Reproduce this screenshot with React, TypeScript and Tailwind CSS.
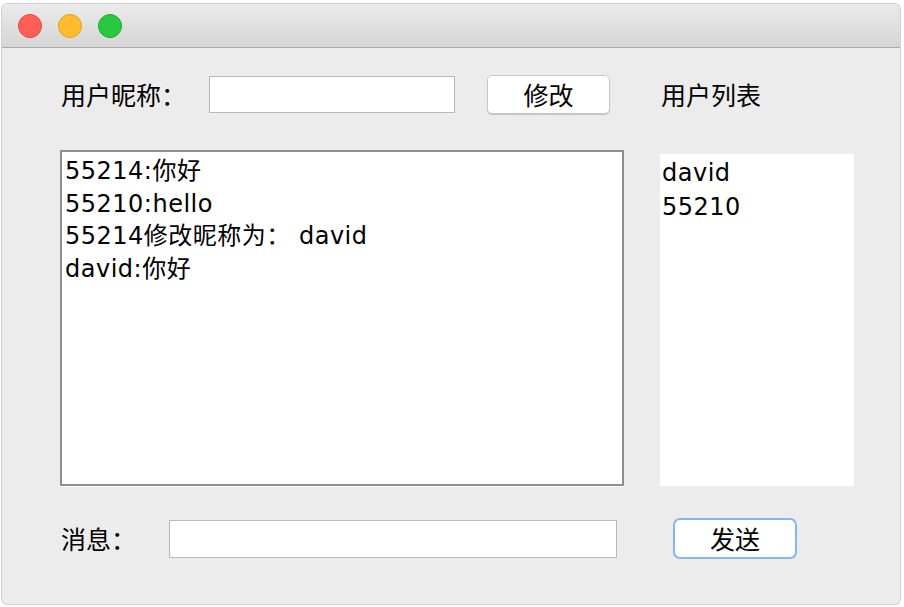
import React from "react";

const F = { fontFamily: '"DejaVu Sans", "Noto Sans CJK SC", sans-serif' };
const C = { fontFamily: '"Noto Sans CJK SC", sans-serif' };

export default function App() {
  return (
    <div className="w-[904px] h-[607px] bg-white pl-[2px] pt-[4px]">
      <div className="w-[898px] h-[600px] rounded-[5px] overflow-hidden bg-[#ececec] flex flex-col shadow-[0_0_0_1px_#d0d0d0]">
        <div className="h-[44px] shrink-0 bg-gradient-to-b from-[#ebebeb] to-[#d5d5d5] border-b border-[#ababab] flex items-center pl-[16px] gap-[16px]">
          <div className="w-[24px] h-[24px] rounded-full bg-[#ff5f57] border border-[#e2463f]" />
          <div className="w-[24px] h-[24px] rounded-full bg-[#febc2e] border border-[#e1a116]" />
          <div className="w-[24px] h-[24px] rounded-full bg-[#28c840] border border-[#1aab29]" />
        </div>
        <div className="pl-[58px] flex flex-col text-black">
          <div className="mt-[27px] h-[39px] flex items-center">
            <div className="ml-[1px] w-[148px] text-[25px] leading-none" style={C}>用户昵称：</div>
            <div className="w-[246px] h-[37px] bg-white border border-[#b9b9b9]" />
            <div className="ml-[32px] w-[123px] h-[39px] bg-white rounded-[5px] border border-[#c8c8c8] shadow-[0_1px_1px_rgba(0,0,0,0.18)] flex items-center justify-center text-[25px] leading-none" style={C}>修改</div>
            <div className="ml-[51px] text-[25px] leading-none" style={C}>用户列表</div>
          </div>
          <div className="mt-[36px] flex items-start">
            <div className="w-[564px] h-[336px] bg-white border-2 border-[#8f8f8f] shadow-[0_1px_0_#fff] pl-[3px] pt-[3px] text-[24px] leading-[32.7px] tracking-[0.5px]" style={F}>
              <div>55214:你好</div>
              <div>55210:hello</div>
              <div>55214修改昵称为： david</div>
              <div>david:你好</div>
            </div>
            <div className="ml-[36px] mt-[4px] w-[194px] h-[332px] bg-white pl-[2px] pt-[2px] text-[24px] leading-[34px] tracking-[0.5px]" style={F}>
              <div>david</div>
              <div>55210</div>
            </div>
          </div>
          <div className="mt-[32px] h-[41px] flex items-center">
            <div className="ml-[1px] w-[108px] text-[25px] leading-none" style={C}>消息：</div>
            <div className="w-[448px] h-[38px] bg-white border border-[#b9b9b9]" />
            <div className="ml-[56px] w-[124px] h-[41px] bg-white rounded-[7px] border-2 border-[#86b6ee] flex items-center justify-center text-[25px] leading-none" style={C}>发送</div>
          </div>
        </div>
      </div>
    </div>
  );
}
